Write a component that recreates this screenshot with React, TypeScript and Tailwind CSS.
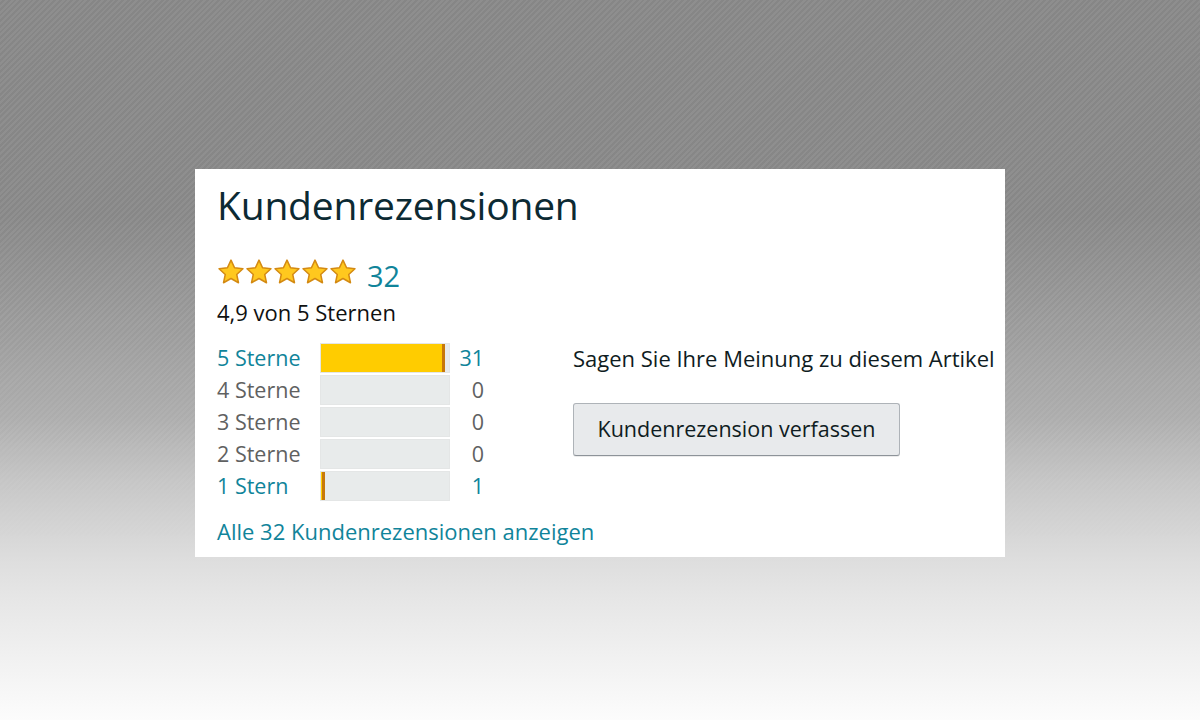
import React from 'react';

const ROWS = [
  { label: '5 Sterne', count: 31, active: true },
  { label: '4 Sterne', count: 0, active: false },
  { label: '3 Sterne', count: 0, active: false },
  { label: '2 Sterne', count: 0, active: false },
  { label: '1 Stern', count: 1, active: true },
];

const TOTAL = 32;

const Star: React.FC = () => (
  <svg viewBox="0 0 24 24" className="w-[28px] h-[28px]">
    <path
      d="M12 1.8l3.05 6.6 7.2.8-5.35 4.9 1.5 7.1L12 17.6l-6.4 3.6 1.5-7.1L1.75 9.2l7.2-.8z"
      fill="#ffc81e"
      stroke="#d48a12"
      strokeWidth="1.3"
      strokeLinejoin="round"
    />
  </svg>
);

const App: React.FC = () => {
  return (
    <div className="relative w-[1200px] h-[720px] overflow-hidden font-['Open_Sans',sans-serif] bg-[linear-gradient(180deg,#8a8a8a_0%,#8b8b8b_30%,#9a9a9a_42%,#b0b0b0_58%,#c8c8c8_67%,#dedede_78%,#e6e6e6_83%,#fcfcfc_100%)]">
      {/* subtle diagonal texture, fading out towards the bottom */}
      <div className="absolute inset-x-0 top-0 h-[560px] [mask-image:linear-gradient(to_bottom,black_50%,transparent)] bg-[repeating-linear-gradient(135deg,rgba(255,255,255,0.035)_0px,rgba(255,255,255,0.035)_2px,rgba(0,0,0,0.025)_2px,rgba(0,0,0,0.025)_4px)]" />

      <div className="relative pt-[169px] pl-[195px]">
        <div className="w-[810px] h-[388px] bg-white pl-[22px] pt-[10px]">
          <h2 className="text-[39px] leading-[52px] text-[#0c2a33] tracking-[-0.2px]">Kundenrezensionen</h2>

          <div className="flex items-center mt-[25px] h-[32px]">
            <div className="flex">
              {[0, 1, 2, 3, 4].map((i) => (
                <Star key={i} />
              ))}
            </div>
            <span className="ml-[10px] text-[29px] leading-[32px] text-[#10849a] pt-[8px]">{TOTAL}</span>
          </div>
          <p className="text-[22px] leading-[30px] text-[#0f1111] mt-[9px]">4,9 von 5 Sternen</p>

          <div className="flex mt-[15px]">
            <div className="w-[268px]">
              {ROWS.map((r) => (
                <div key={r.label} className="flex items-center h-[32px]">
                  <span
                    className={
                      'w-[103px] text-[21.5px] leading-[32px] whitespace-nowrap ' +
                      (r.active ? 'text-[#10849a]' : 'text-[#5f6161]')
                    }
                  >
                    {r.label}
                  </span>
                  <div className="w-[130px] h-[30px] bg-[#e8ebeb] border border-[#e4e6e6]">
                    {r.count > 0 && (
                      <div
                        className="h-full bg-[#ffcc00] border-r-[3px] border-[#c7780a]"
                        style={{ width: `${Math.max(3, Math.round((r.count / TOTAL) * 100))}%` }}
                      />
                    )}
                  </div>
                  <span
                    className={
                      'flex-1 text-right text-[21.5px] leading-[32px] pr-[1px] ' +
                      (r.active ? 'text-[#10849a]' : 'text-[#5f6161]')
                    }
                  >
                    {r.count}
                  </span>
                </div>
              ))}
              <a className="block mt-[15px] text-[22px] leading-[28px] text-[#10849a] whitespace-nowrap">
                Alle 32 Kundenrezensionen anzeigen
              </a>
            </div>

            <div className="ml-[88px]">
              <p className="text-[22px] leading-[32px] text-[#0f1c22] whitespace-nowrap">
                Sagen Sie Ihre Meinung zu diesem Artikel
              </p>
              <button className="mt-[29px] w-[327px] h-[53px] rounded-[3px] bg-[#e8eaec] border border-[#aeb3b8] border-b-[#8d9399] shadow-[0_1px_0_rgba(0,0,0,0.08)] text-[21.5px] text-[#0f1c22]">
                Kundenrezension verfassen
              </button>
            </div>
          </div>
        </div>
      </div>
    </div>
  );
};

export default App;
